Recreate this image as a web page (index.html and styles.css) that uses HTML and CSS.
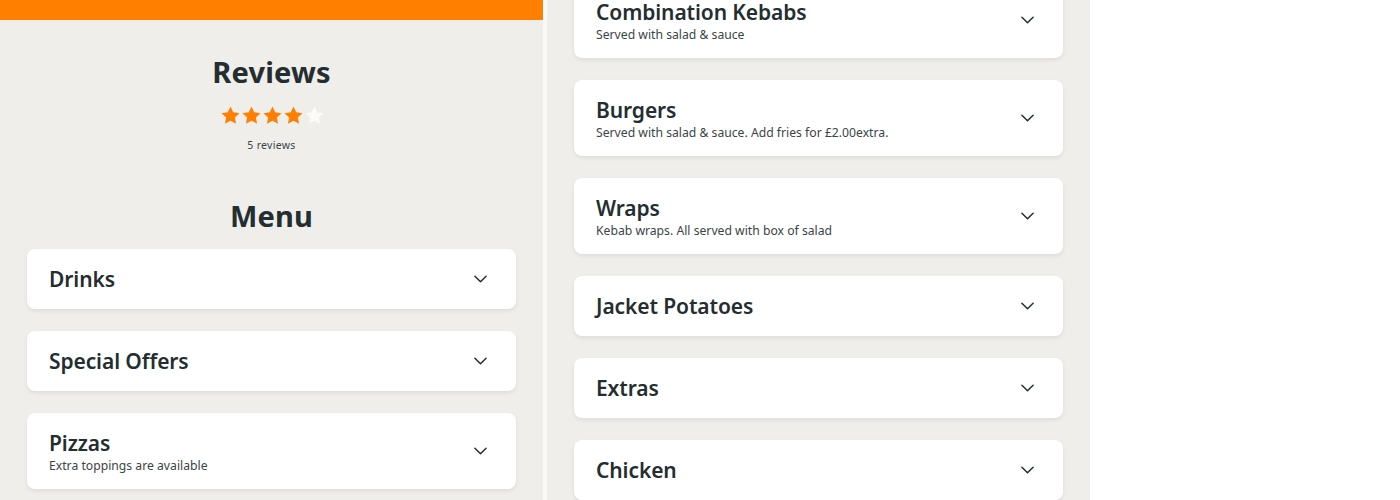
FILE: index.html
```html
<!DOCTYPE html>
<html lang="en">
<head>
<meta charset="utf-8">
<title>Menu</title>
<link rel="stylesheet" href="styles.css">
</head>
<body>
<div class="page">
  <section class="col col-left">
    <div class="topbar"></div>
    <h2 class="section-title reviews-title">Reviews</h2>
    <div class="stars" aria-label="4 out of 5 stars">
      <svg class="star" viewBox="0 0 24 24"><path class="on" d="M12 1.8l3.1 6.6 7.2.9-5.3 5 1.4 7.1L12 17.9l-6.4 3.5L7 14.3l-5.3-5 7.2-.9z"/></svg>
      <svg class="star" viewBox="0 0 24 24"><path class="on" d="M12 1.8l3.1 6.6 7.2.9-5.3 5 1.4 7.1L12 17.9l-6.4 3.5L7 14.3l-5.3-5 7.2-.9z"/></svg>
      <svg class="star" viewBox="0 0 24 24"><path class="on" d="M12 1.8l3.1 6.6 7.2.9-5.3 5 1.4 7.1L12 17.9l-6.4 3.5L7 14.3l-5.3-5 7.2-.9z"/></svg>
      <svg class="star" viewBox="0 0 24 24"><path class="on" d="M12 1.8l3.1 6.6 7.2.9-5.3 5 1.4 7.1L12 17.9l-6.4 3.5L7 14.3l-5.3-5 7.2-.9z"/></svg>
      <svg class="star" viewBox="0 0 24 24"><path class="off" d="M12 1.8l3.1 6.6 7.2.9-5.3 5 1.4 7.1L12 17.9l-6.4 3.5L7 14.3l-5.3-5 7.2-.9z"/></svg>
    </div>
    <p class="review-count">5 reviews</p>
    <h2 class="section-title menu-title">Menu</h2>
    <div class="cards">
      <div class="card">
        <div class="card-text"><h3 class="card-title">Drinks</h3></div>
        <svg class="chev" viewBox="0 0 14 8"><path d="M1 1l6 6 6-6"/></svg>
      </div>
      <div class="card">
        <div class="card-text"><h3 class="card-title">Special Offers</h3></div>
        <svg class="chev" viewBox="0 0 14 8"><path d="M1 1l6 6 6-6"/></svg>
      </div>
      <div class="card">
        <div class="card-text"><h3 class="card-title">Pizzas</h3><p class="card-sub">Extra toppings are available</p></div>
        <svg class="chev" viewBox="0 0 14 8"><path d="M1 1l6 6 6-6"/></svg>
      </div>
    </div>
  </section>
  <section class="col col-right">
    <div class="cards cards-cont">
      <div class="card">
        <div class="card-text"><h3 class="card-title">Combination Kebabs</h3><p class="card-sub">Served with salad &amp; sauce</p></div>
        <svg class="chev" viewBox="0 0 14 8"><path d="M1 1l6 6 6-6"/></svg>
      </div>
      <div class="card">
        <div class="card-text"><h3 class="card-title">Burgers</h3><p class="card-sub">Served with salad &amp; sauce. Add fries for £2.00extra.</p></div>
        <svg class="chev" viewBox="0 0 14 8"><path d="M1 1l6 6 6-6"/></svg>
      </div>
      <div class="card">
        <div class="card-text"><h3 class="card-title">Wraps</h3><p class="card-sub">Kebab wraps. All served with box of salad</p></div>
        <svg class="chev" viewBox="0 0 14 8"><path d="M1 1l6 6 6-6"/></svg>
      </div>
      <div class="card">
        <div class="card-text"><h3 class="card-title">Jacket Potatoes</h3></div>
        <svg class="chev" viewBox="0 0 14 8"><path d="M1 1l6 6 6-6"/></svg>
      </div>
      <div class="card">
        <div class="card-text"><h3 class="card-title">Extras</h3></div>
        <svg class="chev" viewBox="0 0 14 8"><path d="M1 1l6 6 6-6"/></svg>
      </div>
      <div class="card">
        <div class="card-text"><h3 class="card-title">Chicken</h3></div>
        <svg class="chev" viewBox="0 0 14 8"><path d="M1 1l6 6 6-6"/></svg>
      </div>
    </div>
  </section>
</div>
</body>
</html>
```

FILE: styles.css
```css
html, body {
  margin: 0;
  padding: 0;
  background: #ffffff;
  height: 100%;
}
body {
  font-family: "Noto Sans", "Open Sans", sans-serif;
  color: #242e30;
  overflow: hidden;
}
.page {
  display: flex;
  gap: 4px;
  width: 1090px;
  height: 500px;
  background: #f9f9f8;
}
.col {
  background: #efeeeb;
  height: 500px;
  overflow: hidden;
  width: 543px;
}
.topbar {
  height: 20px;
  background: #ff8000;
}
.section-title {
  margin: 0;
  text-align: center;
  font-size: 29px;
  font-weight: 700;
  line-height: 36px;
  letter-spacing: 0.2px;
}
.reviews-title {
  margin-top: 34px;
}
.stars {
  display: flex;
  justify-content: center;
  gap: 0;
  margin-top: 15px;
  padding-left: 1px;
}
.star {
  width: 21px;
  height: 21px;
  display: block;
}
.star .on { fill: #ff8000; }
.star .off { fill: #fbfbfa; }
.review-count {
  margin: 11px 0 0;
  text-align: center;
  font-size: 10.5px;
  line-height: 16px;
  letter-spacing: 0.3px;
  color: #3b4446;
}
.menu-title {
  margin-top: 45px;
}
.cards {
  display: flex;
  flex-direction: column;
  gap: 22.5px;
  padding: 0 27px;
  margin-top: 15px;
}
.cards-cont {
  margin-top: -18px;
}
.card {
  background: #ffffff;
  border-radius: 8px;
  box-shadow: 0 2px 4px rgba(0, 0, 0, 0.08);
  display: flex;
  align-items: center;
  padding: 17px 29px 15px 22px;
}
.chev {
  margin-top: -1px;
}
.card-text {
  flex: 1;
  min-width: 0;
}
.card-title {
  margin: 0;
  font-size: 21px;
  font-weight: 600;
  line-height: 27.5px;
  letter-spacing: -0.1px;
}
.card-sub {
  margin: 0;
  font-size: 12.2px;
  line-height: 16px;
  color: #3b4446;
}
.chev {
  width: 13px;
  height: 8px;
  fill: none;
  stroke: #242e30;
  stroke-width: 1.6;
  stroke-linecap: round;
  stroke-linejoin: round;
  flex: none;
}
```
